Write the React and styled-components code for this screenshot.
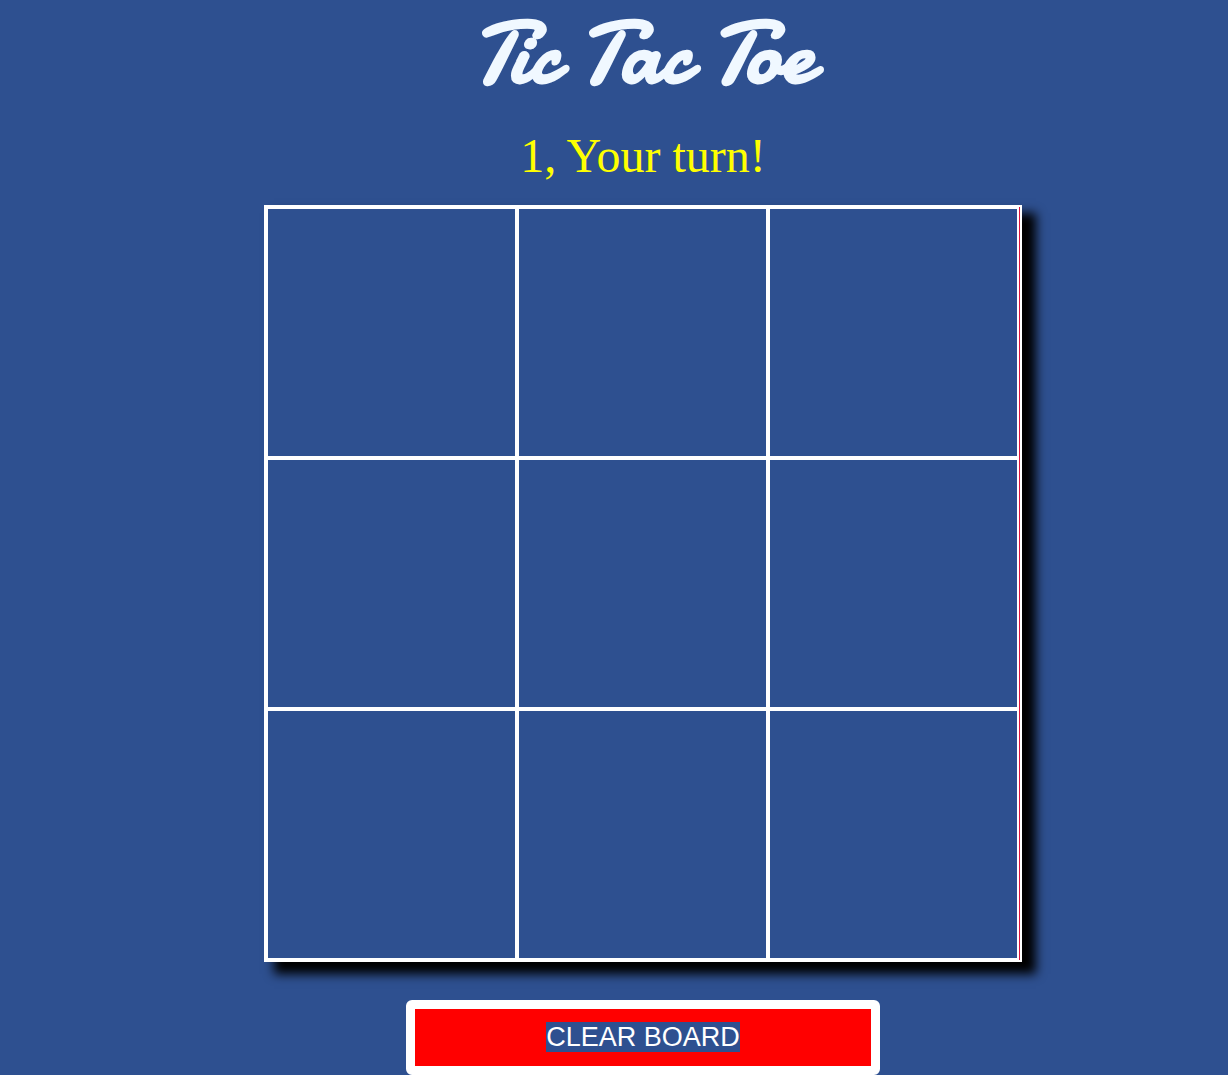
import React, { useState } from "react";
import styled, { createGlobalStyle } from "styled-components";

const GlobalStyle = createGlobalStyle`
  * { box-sizing: border-box; }
  body {
    margin: 0;
    background: #2e5090;
    font-family: "Liberation Serif", "Times New Roman", serif;
  }
`;

const Page = styled.main`
  display: flex;
  flex-direction: column;
  align-items: center;
  padding-left: 58px;
`;

const Title = styled.h1`
  margin: 0;
  color: aliceblue;
  font-family: Damion, Lato, cursive;
  font-size: 88px;
  font-weight: 700;
  line-height: 108px;
`;

const Status = styled.p`
  margin: 19px 0 21px;
  color: yellow;
  font-size: 48px;
  line-height: 57px;
`;

const Board = styled.section`
  display: grid;
  grid-template-columns: repeat(3, 1fr);
  width: 100%;
  max-width: 758px;
  padding-right: 1px;
  border: 2px solid white;
  background: crimson;
  box-shadow: 12px 10px 10px 2px black;
`;

const Cell = styled.button`
  aspect-ratio: 1;
  min-width: 0;
  padding: 0;
  border: 2px solid white;
  border-radius: 0;
  background: #2e5090;
  color: white;
  font-family: "Liberation Sans", Arial, sans-serif;
  font-size: 120px;
  line-height: 1;
`;

const ClearButton = styled.button`
  width: 100%;
  max-width: 474px;
  height: 75px;
  margin-top: 38px;
  padding: 0;
  border: 9px solid white;
  border-radius: 6px;
  background: red;
  color: white;
  font-family: "Liberation Sans", Arial, sans-serif;
  font-size: 27px;
`;

const Label = styled.span`
  background: #2e5090;
`;

const emptyBoard = Array(9).fill("");

export default function App() {
  const [cells, setCells] = useState(emptyBoard);
  const [player, setPlayer] = useState(1);

  const play = (index) => {
    if (cells[index]) return;
    setCells(cells.map((mark, i) => (i === index ? (player === 1 ? "X" : "O") : mark)));
    setPlayer(player === 1 ? 2 : 1);
  };

  const clear = () => {
    setCells(emptyBoard);
    setPlayer(1);
  };

  return (
    <>
      <GlobalStyle />
      <Page>
        <Title>Tic Tac Toe</Title>
        <Status>{`${player}, Your turn!`}</Status>
        <Board>
          {cells.map((mark, index) => (
            <Cell
              key={index}
              type="button"
              aria-label={`Square ${index + 1}`}
              onClick={() => play(index)}
            >
              {mark}
            </Cell>
          ))}
        </Board>
        <ClearButton type="button" onClick={clear}>
          <Label>CLEAR BOARD</Label>
        </ClearButton>
      </Page>
    </>
  );
}
